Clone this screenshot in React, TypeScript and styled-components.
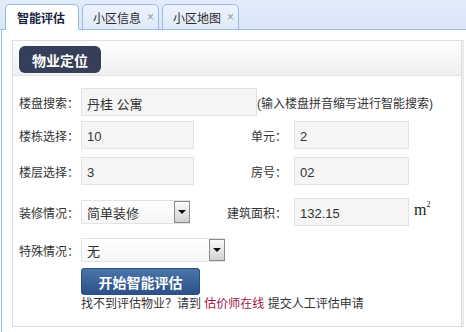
import React from 'react';
import styled, { createGlobalStyle } from 'styled-components';

const GlobalStyle = createGlobalStyle`
  body {
    margin: 0;
    background: #ffffff;
    font-family: "Liberation Sans", "Noto Sans CJK SC", sans-serif;
    color: #333333;
  }
`;

function App() {
  return (
    <>
      <GlobalStyle />
      <Page>
        <TabBar>
          <Tab $active>智能评估</Tab>
          <Tab>
            小区信息<Close>×</Close>
          </Tab>
          <Tab>
            小区地图<Close>×</Close>
          </Tab>
        </TabBar>

        <Body>
          <Panel>
            <PanelHeader>
              <HeaderPill>物业定位</HeaderPill>
            </PanelHeader>

            <Form>
              <Row $top={12}>
                <Label>楼盘搜索：</Label>
                <TextInput $width={176} defaultValue="丹桂 公寓" />
                <Hint>(输入楼盘拼音缩写进行智能搜索)</Hint>
              </Row>

              <Row $top={5}>
                <Label>楼栋选择：</Label>
                <TextInput $width={113} defaultValue="10" />
                <RightLabel>单元：</RightLabel>
                <TextInput $width={115} defaultValue="2" />
              </Row>

              <Row $top={8}>
                <Label>楼层选择：</Label>
                <TextInput $width={113} defaultValue="3" />
                <RightLabel>房号：</RightLabel>
                <TextInput $width={115} defaultValue="02" />
              </Row>

              <Row $top={13}>
                <Label>装修情况：</Label>
                <Select $width={109}>
                  <SelectText>简单装修</SelectText>
                  <DropButton>
                    <Arrow />
                  </DropButton>
                </Select>
                <RightLabel $width={104}>建筑面积：</RightLabel>
                <TextInput $width={115} defaultValue="132.15" />
                <Unit>
                  m<sup>2</sup>
                </Unit>
              </Row>

              <Row $top={12}>
                <Label>特殊情况：</Label>
                <Select $width={144}>
                  <SelectText>无</SelectText>
                  <DropButton>
                    <Arrow />
                  </DropButton>
                </Select>
              </Row>

              <SubmitButton>开始智能评估</SubmitButton>

              <Notice>
                找不到评估物业？请到 <NoticeLink>估价师在线</NoticeLink> 提交人工评估申请
              </Notice>
            </Form>
          </Panel>
        </Body>
      </Page>
    </>
  );
}

export default App;

const Page = styled.div`
  width: 466px;
  height: 332px;
  overflow: hidden;
  display: flex;
  flex-direction: column;
  background: #ffffff;
`;

const TabBar = styled.div`
  display: flex;
  align-items: flex-end;
  gap: 3px;
  height: 29px;
  padding-left: 5px;
  background: linear-gradient(#e3ecfa, #d9e5f8);
  border-bottom: 1px solid #99bbe8;
`;

const Tab = styled.div<{ $active?: boolean }>`
  display: flex;
  align-items: center;
  justify-content: ${(p) => (p.$active ? 'center' : 'flex-start')};
  box-sizing: border-box;
  width: ${(p) => (p.$active ? '74px' : '77px')};
  height: 26px;
  margin-bottom: -1px;
  padding: ${(p) => (p.$active ? '0 2px 0 0' : '0 0 0 10px')};
  border: 1px solid #99bbe8;
  border-bottom: ${(p) => (p.$active ? '1px solid #ffffff' : '1px solid #99bbe8')};
  border-radius: 5px 5px 0 0;
  background: ${(p) => (p.$active ? '#ffffff' : 'linear-gradient(#eef3fc, #dfe9f8)')};
  font-size: 12px;
  font-weight: ${(p) => (p.$active ? 'bold' : 'normal')};
  color: ${(p) => (p.$active ? '#15233f' : '#2a2a2a')};
`;

const Close = styled.span`
  margin-left: 6px;
  font-size: 12px;
  color: #8b97ad;
`;

const Body = styled.div`
  flex: 1;
  margin-left: 1px;
  padding: 10px 4px 5px 10px;
  border-left: 1px solid #99bbe8;
`;

const Panel = styled.div`
  box-sizing: border-box;
  width: 450px;
  height: 287px;
  border: 1px solid #dddddd;
  box-shadow: 1px 0 0 #f1f1f1, 2px 0 0 #e8e8e8;
  background: #ffffff;
`;

const PanelHeader = styled.div`
  height: 35px;
  padding: 5px 0 0 6px;
  box-sizing: border-box;
  background: linear-gradient(#ffffff, #efefef);
  border-bottom: 1px solid #e2e2e2;
`;

const HeaderPill = styled.div`
  display: flex;
  align-items: center;
  justify-content: center;
  width: 82px;
  height: 27px;
  border-radius: 6px;
  background: #363f5a;
  color: #ffffff;
  font-size: 14px;
  font-weight: bold;
`;

const Form = styled.div`
  display: flex;
  flex-direction: column;
  padding-left: 6px;
`;

const Row = styled.div<{ $top: number }>`
  display: flex;
  align-items: center;
  margin-top: ${(p) => p.$top}px;
  font-size: 12px;
`;

const Label = styled.span`
  width: 62px;
  flex-shrink: 0;
`;

const RightLabel = styled.span<{ $width?: number }>`
  width: ${(p) => p.$width ?? 100}px;
  flex-shrink: 0;
  box-sizing: border-box;
  padding-right: 7px;
  text-align: right;
`;

const TextInput = styled.input.attrs({ type: 'text' })<{ $width: number }>`
  box-sizing: border-box;
  width: ${(p) => p.$width}px;
  height: 28px;
  margin: 0;
  padding: 2px 0 0 5px;
  border: 1px solid #e1e1e1;
  background: #f5f5f5;
  font-family: "Liberation Sans", "Noto Sans CJK SC", sans-serif;
  font-size: 13px;
  color: #333333;
  outline: none;
`;

const Hint = styled.span`
  color: #333333;
`;

const Select = styled.div<{ $width: number }>`
  display: flex;
  align-items: center;
  justify-content: space-between;
  box-sizing: border-box;
  width: ${(p) => p.$width}px;
  height: 24px;
  border: 1px solid #e3e3e3;
  background: linear-gradient(#ffffff, #f6f6f6);
`;

const SelectText = styled.span`
  padding-left: 5px;
  font-size: 13px;
  color: #333333;
`;

const DropButton = styled.div`
  display: flex;
  align-items: center;
  justify-content: center;
  box-sizing: border-box;
  width: 16px;
  height: 22px;
  margin-right: -1px;
  border: 1px solid #8a8a8a;
  background: linear-gradient(#fbfbfb, #d2d2d2);
`;

const Arrow = styled.span`
  width: 0;
  height: 0;
  border-left: 4px solid transparent;
  border-right: 4px solid transparent;
  border-top: 4px solid #111111;
`;

const Unit = styled.span`
  align-self: flex-start;
  margin-left: 5px;
  margin-top: 2px;
  font-family: "Liberation Serif", serif;
  font-size: 16px;
  color: #222222;

  sup {
    font-size: 8px;
    vertical-align: 8px;
  }
`;

const SubmitButton = styled.button`
  box-sizing: border-box;
  width: 119px;
  height: 27px;
  margin: 6px 0 0 62px;
  border: none;
  border-radius: 4px;
  background: linear-gradient(#4c76ab, #2a5087);
  box-shadow: inset 0 0 0 1px #2c4f80;
  color: #ffffff;
  font-family: "Liberation Sans", "Noto Sans CJK SC", sans-serif;
  font-size: 14px;
  font-weight: bold;
`;

const Notice = styled.div`
  margin: 0 0 0 62px;
  font-size: 12px;
  line-height: 18px;
  color: #333333;
`;

const NoticeLink = styled.span`
  color: #a3123f;
`;
